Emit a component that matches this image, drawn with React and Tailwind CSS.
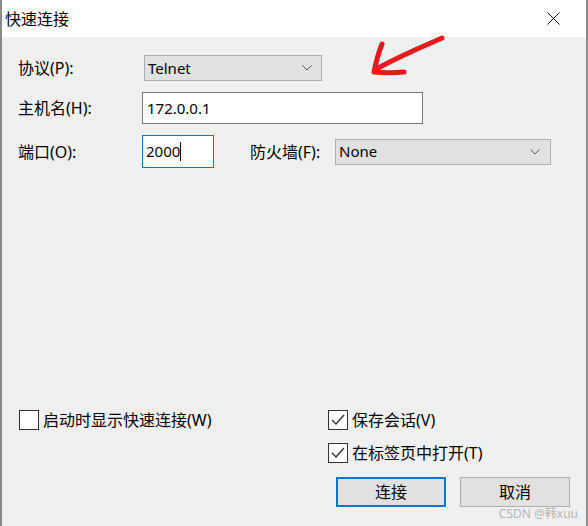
import React from 'react'

const font = { fontFamily: '"Noto Sans", "Noto Sans CJK SC", sans-serif' }

const Chevron = () => (
  <svg width="10" height="6" viewBox="0 0 10 6" className="shrink-0">
    <polyline points="0.5,0.5 5,5 9.5,0.5" fill="none" stroke="#555" strokeWidth="1" />
  </svg>
)

const Check = ({ checked }) => (
  <span className="w-[20px] h-[20px] border border-[#333] bg-white flex items-center justify-center shrink-0">
    {checked && (
      <svg width="14" height="12" viewBox="0 0 14 12">
        <polyline points="1,6 5,10 13,1" fill="none" stroke="#333" strokeWidth="1.4" />
      </svg>
    )}
  </span>
)

const Label = ({ children, w }) => (
  <div className={`text-[16px] text-black leading-none ${w}`}>{children}</div>
)

export default function App() {
  return (
    <div style={font} className="relative w-[588px] h-[526px] flex flex-col bg-[#f0f0f0] border-l-2 border-l-[#8a8a8a] border-r-2 border-r-[#8a8a8a] overflow-hidden">
      {/* title bar */}
      <div className="h-[37px] bg-white flex items-center justify-between pl-[3px] pr-[26px] shrink-0">
        <span className="text-[16px] text-black">快速连接</span>
        <svg width="13" height="13" viewBox="0 0 13 13">
          <path d="M0.5 0.5 L12.5 12.5 M12.5 0.5 L0.5 12.5" stroke="#111" strokeWidth="1" />
        </svg>
      </div>

      <div className="flex-1 flex flex-col pt-[18px] pl-[16px] pb-[19px]">
        {/* protocol */}
        <div className="flex items-center h-[26px]">
          <Label w="w-[126px]">协议(P):</Label>
          <div className="w-[178px] h-[26px] bg-[#e1e1e1] border border-[#adadad] flex items-center justify-between pl-[3px] pr-[9px]">
            <span className="text-[15px] text-black">Telnet</span>
            <Chevron />
          </div>
        </div>

        {/* host */}
        <div className="flex items-center h-[32px] mt-[11px]">
          <Label w="w-[124px]">主机名(H):</Label>
          <div className="w-[281px] h-[32px] bg-white border border-[#7a7a7a] flex items-center pl-[4px]">
            <span className="text-[15px] text-black">172.0.0.1</span>
          </div>
        </div>

        {/* port + firewall */}
        <div className="flex items-center h-[33px] mt-[11px]">
          <Label w="w-[124px]">端口(O):</Label>
          <div className="w-[72px] h-[33px] bg-white border border-[#0078d7] flex items-center pl-[3px]">
            <span className="text-[15px] text-black">2000</span>
            <span className="w-px h-[19px] bg-black" />
          </div>
          <Label w="w-[85px] ml-[36px]">防火墙(F):</Label>
          <div className="w-[216px] h-[26px] bg-[#e1e1e1] border border-[#adadad] flex items-center justify-between pl-[3px] pr-[10px]">
            <span className="text-[15px] text-black">None</span>
            <Chevron />
          </div>
        </div>

        <div className="flex-1" />

        {/* options + buttons */}
        <div className="flex">
          <div className="w-[310px] flex flex-col pl-[1px]">
            <label className="flex items-center gap-[4px] h-[20px]">
              <Check />
              <span className="text-[16px] text-black">启动时显示快速连接(W)</span>
            </label>
          </div>
          <div className="flex flex-col">
            <label className="flex items-center gap-[4px] h-[20px]">
              <Check checked />
              <span className="text-[16px] text-black">保存会话(V)</span>
            </label>
            <label className="flex items-center gap-[4px] h-[20px] mt-[13px]">
              <Check checked />
              <span className="text-[16px] text-black">在标签页中打开(T)</span>
            </label>
            <div className="flex gap-[14px] mt-[14px] ml-[8px]">
              <button className="w-[110px] h-[30px] bg-[#e1e1e1] border-2 border-[#0078d7] text-[16px] text-black">连接</button>
              <button className="w-[110px] h-[30px] bg-[#e1e1e1] border border-[#adadad] text-[16px] text-black">取消</button>
            </div>
          </div>
        </div>
      </div>

      {/* red annotation arrow */}
      <svg className="absolute left-[362px] top-[32px]" width="84" height="46" viewBox="0 0 84 46">
        <path d="M78 6 C60 14 40 22 14 36" fill="none" stroke="#e8191c" strokeWidth="5" strokeLinecap="round" />
        <path d="M18 12 C14 22 12 30 10 40 C20 41 30 41 40 40" fill="none" stroke="#e8191c" strokeWidth="5" strokeLinecap="round" strokeLinejoin="round" />
      </svg>

      {/* watermark */}
      <span className="absolute right-[8px] bottom-[6px] text-[12px] text-[#b5b5b5] leading-none">CSDN @韩xuu</span>
    </div>
  )
}
